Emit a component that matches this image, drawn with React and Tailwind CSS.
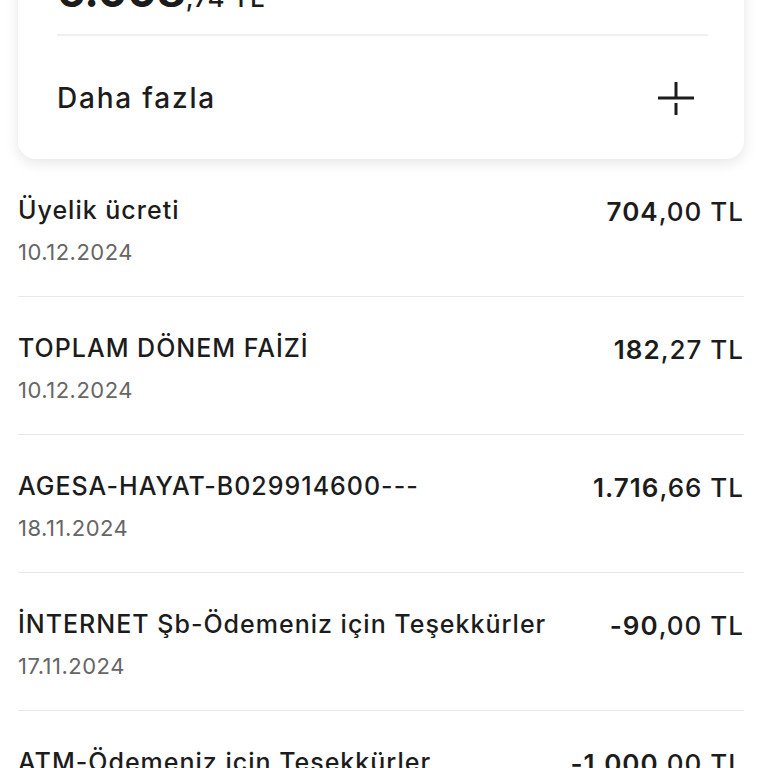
import React from 'react';

const rows = [
  { title: 'Üyelik ücreti', date: '10.12.2024', whole: '704', dec: ',00 TL' },
  { title: 'TOPLAM DÖNEM FAİZİ', date: '10.12.2024', whole: '182', dec: ',27 TL' },
  { title: 'AGESA-HAYAT-B029914600---', date: '18.11.2024', whole: '1.716', dec: ',66 TL' },
  { title: 'İNTERNET Şb-Ödemeniz için Teşekkürler', date: '17.11.2024', whole: '-90', dec: ',00 TL' },
  { title: 'ATM-Ödemeniz için Teşekkürler', date: '17.11.2024', whole: '-1.000', dec: ',00 TL' },
];

const PlusIcon = () => (
  <svg width="38" height="36" viewBox="0 0 38 36" fill="none" stroke="#1c1c1c" strokeWidth="3">
    <line x1="1" y1="17" x2="37" y2="17" />
    <line x1="19" y1="1" x2="19" y2="17" />
    <line x1="19" y1="22" x2="19" y2="34" />
  </svg>
);

const App = () => {
  return (
    <div
      className="w-[768px] h-[768px] overflow-hidden bg-white text-[#1c1c1c]"
      style={{ fontFamily: 'Inter, "Noto Sans", sans-serif' }}
    >
      <div className="ml-[18px] mr-[24px] -mt-[45px] pt-[16px] bg-white rounded-[18px] shadow-[0_4px_14px_rgba(0,0,0,0.10)] pl-[39px] pr-[36px]">
        <div className="h-[40px] leading-[40px] flex items-baseline">
          <span className="text-[44px] font-bold">6.008</span>
          <span className="text-[26px] font-medium tracking-[0.5px]">,74 TL</span>
        </div>
        <div className="mt-[23px] h-[2px] bg-[#efefef]" />
        <div className="h-[123px] flex items-center justify-between">
          <span className="text-[28px] font-medium tracking-[1.8px]">Daha fazla</span>
          <span className="mr-[13px] mt-[2px]">
            <PlusIcon />
          </span>
        </div>
      </div>

      <div className="pl-[18px] pr-[24px]">
        {rows.map((r, i) => (
          <div key={i} className="pt-[37px] pb-[31px] border-b border-[#e8e8e8]">
            <div className="flex items-center justify-between h-[30px]">
              <span className="text-[25px] font-medium tracking-[1px] whitespace-nowrap">{r.title}</span>
              <span className="text-[26px] tracking-[1px] whitespace-nowrap">
                <span className="font-semibold">{r.whole}</span>
                <span className="font-medium">{r.dec}</span>
              </span>
            </div>
            <div className="mt-[13px] h-[26px] leading-[26px] text-[22px] tracking-[0.5px] text-[#666666]">{r.date}</div>
          </div>
        ))}
      </div>
    </div>
  );
};

export default App;
